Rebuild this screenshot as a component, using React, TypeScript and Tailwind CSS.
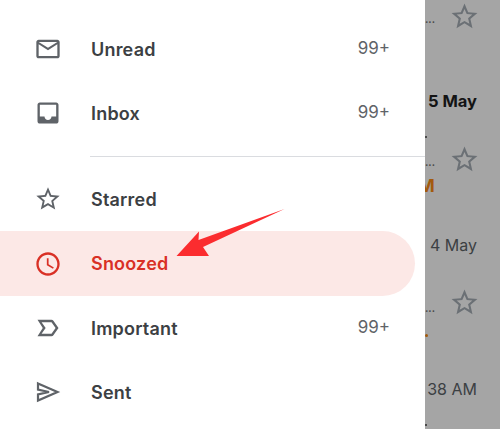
// App.tsx
const PATHS = {
  mail: "M22 6c0-1.1-.9-2-2-2H4c-1.1 0-2 .9-2 2v12c0 1.1.9 2 2 2h16c1.1 0 2-.9 2-2V6zm-2 0l-8 5-8-5h16zm0 12H4V8l8 5 8-5v10z",
  inbox: "M19 3H4.99c-1.11 0-1.98.89-1.98 2L3 19c0 1.1.88 2 1.99 2H19c1.1 0 2-.9 2-2V5c0-1.11-.9-2-2-2zm0 12h-4c0 1.66-1.35 3-3 3s-3-1.34-3-3H4.99V5H19v10z",
  star: "M22 9.24l-7.19-.62L12 2 9.19 8.63 2 9.24l5.46 4.73L5.82 21 12 17.27 18.18 21l-1.63-7.03L22 9.24zM12 15.4l-3.76 2.27 1-4.28-3.32-2.88 4.38-.38L12 6.1l1.71 4.04 4.38.38-3.32 2.88 1 4.28L12 15.4z",
  clock: "M11.99 2C6.47 2 2 6.48 2 12s4.47 10 9.99 10C17.52 22 22 17.52 22 12S17.52 2 11.99 2zM12 20c-4.42 0-8-3.58-8-8s3.58-8 8-8 8 3.58 8 8-3.58 8-8 8zm.5-13H11v6l5.25 3.15.75-1.23-4.5-2.67z",
  label: "M15 19H3l4.5-7L3 5h12c.65 0 1.26.31 1.63.84L21 12l-4.37 6.16c-.37.52-.98.84-1.63.84zm-8.5-2H15l3.5-5L15 7H6.5l3.5 5-3.5 5z",
};

function Icon({ d, className }: { d: string; className: string }) {
  return (
    <svg viewBox="0 0 24 24" className={className} fill="currentColor">
      <path d={d} />
    </svg>
  );
}

function SendIcon() {
  return (
    <svg viewBox="0 0 28 28" className="h-[28px] w-[28px] shrink-0 text-[#5f6368]" fill="none" stroke="currentColor" strokeWidth="2.2">
      <path d="M4 5.5L23.5 14L4 22.5V16.3L15 14L4 11.7Z" />
    </svg>
  );
}

function NavRow({ icon, label, count }: { icon?: string; label: string; count?: string }) {
  return (
    <div className="flex h-16 items-center pl-[34px] pr-[35px]">
      {icon ? <Icon d={icon} className="h-[28px] w-[28px] shrink-0 text-[#5f6368]" /> : <SendIcon />}
      <span className="ml-[29px] flex-1 text-[18px] font-semibold tracking-[0.2px] text-[#3c4043]">{label}</span>
      {count && <span className="text-[17px] text-[#5f6368]">{count}</span>}
    </div>
  );
}

function MailStarRow({ dotsMt }: { dotsMt: string }) {
  return (
    <div className="flex h-8 items-center justify-between pr-[20px]">
      <span className={`text-[10px] font-bold leading-none text-[#4a4a4a] ${dotsMt}`}>...</span>
      <Icon d={PATHS.star} className="h-[31px] w-[31px] text-[#6b7075]" />
    </div>
  );
}

export default function App() {
  return (
    <div className="relative flex h-[429px] w-[500px] overflow-hidden bg-white font-['Inter',sans-serif]">
      {/* Drawer */}
      <div className="flex w-[425px] shrink-0 flex-col bg-white pt-[17px]">
        <NavRow icon={PATHS.mail} label="Unread" count="99+" />
        <NavRow icon={PATHS.inbox} label="Inbox" count="99+" />
        <div className="mb-[10px] ml-[90px] mt-[11px] h-px bg-[#dadce0]" />
        <NavRow icon={PATHS.star} label="Starred" />
        <div className="mr-[10px] flex h-[65px] items-center rounded-r-full bg-[#fce8e6] pl-[34px]">
          <Icon d={PATHS.clock} className="h-[28px] w-[28px] shrink-0 text-[#d93025]" />
          <span className="ml-[29px] text-[18px] font-semibold tracking-[0.2px] text-[#d93025]">Snoozed</span>
        </div>
        <NavRow icon={PATHS.label} label="Important" count="99+" />
        <NavRow label="Sent" />
      </div>

      {/* Dimmed mail list behind the drawer */}
      <div className="flex flex-1 flex-col overflow-hidden bg-[#a5a5a5]">
        <MailStarRow dotsMt="mt-[6px]" />
        <div className="mt-[58px] h-[22px] pr-[23px] text-right text-[16.5px] font-bold leading-[22px] text-[#141414]">5 May</div>
        <div className="ml-0 mt-[24px] h-[2px] w-[2px] bg-[#4a4a4a]" />
        <div className="mt-[5px]">
          <MailStarRow dotsMt="mt-[6px]" />
        </div>
        <div className="mt-[1px] h-5 text-[18px] font-bold leading-5 text-[#a35a0c]">
          <span className="-ml-[7px] block">M</span>
        </div>
        <div className="mt-[39px] h-5 pr-[23px] text-right text-[16px] leading-5 text-[#3c4043]">4 May</div>
        <div className="mt-[31px]">
          <MailStarRow dotsMt="mt-[12px]" />
        </div>
        <div className="mt-[16px] h-[3px] w-[3px] rounded-full bg-[#a35a0c]" />
        <div className="mt-[42px] h-5 pr-[23px] text-right text-[16px] leading-5 text-[#3c4043]">38 AM</div>
        <div className="mt-[25px] h-[2px] w-[2px] bg-[#4a4a4a]" />
      </div>

      {/* Annotation arrow */}
      <svg className="pointer-events-none absolute left-0 top-0 h-[429px] w-[500px]" viewBox="0 0 500 429">
        <polygon points="176.5,256 199,231.5 198.5,240 284.5,209 203,247 209,256" fill="#fb2c2f" />
      </svg>
    </div>
  );
}
